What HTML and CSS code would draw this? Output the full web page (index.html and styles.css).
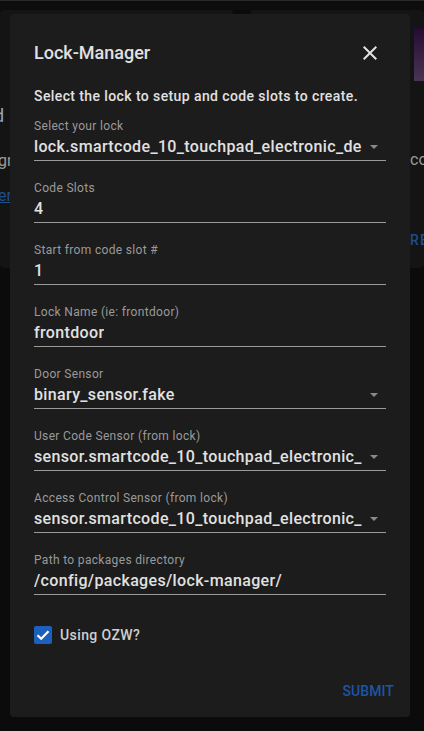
FILE: index.html
```html
<!DOCTYPE html>
<html>
<head>
<meta charset="utf-8">
<link rel="stylesheet" href="styles.css">
</head>
<body>
<div class="page">
  <div class="topbar"></div>
  <div class="cards">
    <div class="card card-left">
      <div class="bg-line bg-icon">d</div>
      <div class="bg-line bg-text">gn</div>
      <div class="bg-line bg-link">er</div>
    </div>
    <div class="card card-right">
      <div class="bg-img"></div>
      <div class="bg-line bg-text2">co</div>
      <div class="bg-line bg-btn">RE</div>
    </div>
  </div>
</div>

<div class="dialog">
  <div class="dialog-head">
    <h2 class="title">Lock-Manager</h2>
    <button class="close" aria-label="close">
      <svg viewBox="0 0 24 24" width="24" height="24"><path d="M19,6.41L17.59,5L12,10.59L6.41,5L5,6.41L10.59,12L5,17.59L6.41,19L12,13.41L17.59,19L19,17.59L13.41,12L19,6.41Z" fill="currentColor"/></svg>
    </button>
  </div>
  <p class="intro">Select the lock to setup and code slots to create.</p>

  <div class="field select">
    <div class="label">Select your lock</div>
    <div class="value-row"><span class="value">lock.smartcode_10_touchpad_electronic_de</span><span class="arrow"></span></div>
  </div>
  <div class="field">
    <div class="label">Code Slots</div>
    <div class="value-row"><span class="value">4</span></div>
  </div>
  <div class="field">
    <div class="label">Start from code slot #</div>
    <div class="value-row"><span class="value">1</span></div>
  </div>
  <div class="field">
    <div class="label">Lock Name (ie: frontdoor)</div>
    <div class="value-row"><span class="value">frontdoor</span></div>
  </div>
  <div class="field select">
    <div class="label">Door Sensor</div>
    <div class="value-row"><span class="value">binary_sensor.fake</span><span class="arrow"></span></div>
  </div>
  <div class="field select">
    <div class="label">User Code Sensor (from lock)</div>
    <div class="value-row"><span class="value">sensor.smartcode_10_touchpad_electronic_</span><span class="arrow"></span></div>
  </div>
  <div class="field select">
    <div class="label">Access Control Sensor (from lock)</div>
    <div class="value-row"><span class="value">sensor.smartcode_10_touchpad_electronic_</span><span class="arrow"></span></div>
  </div>
  <div class="field">
    <div class="label">Path to packages directory</div>
    <div class="value-row"><span class="value">/config/packages/lock-manager/</span></div>
  </div>

  <label class="check">
    <span class="box">
      <svg viewBox="0 0 18 18" width="18" height="18"><path d="M3.5 9.2 L7.2 12.8 L14.5 5.3" fill="none" stroke="#fff" stroke-width="2.2"/></svg>
    </span>
    <span class="check-label">Using OZW?</span>
  </label>

  <div class="actions">
    <button class="submit">SUBMIT</button>
  </div>
</div>
</body>
</html>
```
FILE: styles.css
```css
* { box-sizing: border-box; }
html, body { margin: 0; padding: 0; }
body {
  width: 424px;
  height: 731px;
  overflow: hidden;
  background: #0b0b0b;
  font-family: Roboto, "Noto Sans", sans-serif;
  position: relative;
}

/* dimmed background page */
.page { display: flex; flex-direction: column; }
.topbar {
  height: 10px;
  border-top: 1px solid #2a2a2a;
  background: #0d0d0d;
}
.cards {
  display: flex;
  gap: 17px;
  height: 258px;
}
.card {
  background: #141414;
  border-radius: 4px;
  position: relative;
  overflow: hidden;
}
.card-left { width: 233px; }
.card-right { flex: 1; }
.bg-line {
  font-size: 14px;
  line-height: 16px;
  white-space: nowrap;
}
.bg-icon { margin-top: 96px; margin-left: -6px; color: #8fa8bf; font-size: 18px; line-height: 20px; }
.bg-text { margin-top: 25px; margin-left: -2px; color: #9a9a9a; font-size: 16px; line-height: 20px; }
.bg-link { margin-top: 15px; margin-left: -2px; color: #1e4f8f; text-decoration: underline; font-size: 16px; line-height: 20px; }
.bg-img {
  position: absolute;
  left: 164px;
  top: 18px;
  width: 20px;
  height: 53px;
  background: linear-gradient(#250b33, #4a3553);
}
.bg-text2 { position: absolute; left: 160px; top: 140px; color: #9a9a9a; font-size: 16px; line-height: 20px; }
.bg-btn { position: absolute; left: 160px; top: 222px; color: #1f4d8c; font-weight: 500; letter-spacing: 1.2px; font-size: 14px; }

/* dialog */
.dialog {
  position: absolute;
  left: 10px;
  top: 14px;
  width: 400px;
  height: 703px;
  background: #1c1c1c;
  border-radius: 4px;
  padding: 27px 24px 8px 24px;
  display: flex;
  flex-direction: column;
  color: #e1e1e1;
}
.dialog-head {
  display: flex;
  align-items: center;
  justify-content: space-between;
  height: 24px;
}
.title {
  margin: 0;
  font-size: 18px;
  line-height: 24px;
  font-weight: 500;
  color: #e1e1e1;
}
.close {
  background: none;
  border: 0;
  padding: 0;
  width: 24px;
  height: 24px;
  margin-right: 4px;
  color: #e1e1e1;
  display: flex;
}
.intro {
  margin: 21px 0 12px 0;
  font-size: 14px;
  line-height: 20px;
  font-weight: 500;
  letter-spacing: 0.4px;
  color: #e1e1e1;
}
.field {
  border-bottom: 1px solid #9a9a9a;
  margin-bottom: 19px;
}
.label {
  font-size: 12px;
  line-height: 16px;
  letter-spacing: 0.33px;
  color: #9a9a9a;
  margin-bottom: 1px;
}
.value-row {
  display: flex;
  align-items: center;
  height: 25px;
  padding-bottom: 1px;
}
.value {
  font-size: 16px;
  line-height: 24px;
  font-weight: 500;
  letter-spacing: 0.35px;
  color: #e1e1e1;
  white-space: nowrap;
  overflow: hidden;
  flex: 0 1 auto;
  max-width: 332px;
}
.arrow {
  margin-left: auto;
  margin-right: 8px;
  width: 0;
  height: 0;
  border-left: 4.5px solid transparent;
  border-right: 4.5px solid transparent;
  border-top: 4.5px solid #8a8a8a;
}
.check {
  display: flex;
  align-items: center;
  gap: 8px;
  margin-top: 11px;
}
.box {
  width: 18px;
  height: 18px;
  border-radius: 2px;
  background: #1c5fbd;
  display: flex;
}
.check-label {
  font-size: 14px;
  line-height: 20px;
  font-weight: 500;
  letter-spacing: 0.4px;
  color: #cfcfcf;
}
.actions {
  margin-top: auto;
  display: flex;
  justify-content: flex-end;
}
.submit {
  background: none;
  border: 0;
  font-family: Roboto, sans-serif;
  font-size: 14px;
  font-weight: 500;
  letter-spacing: 0.1px;
  color: #1b56a6;
  height: 36px;
  padding: 0 8px;
  margin-right: -16px;
  margin-bottom: 0;
}
```
